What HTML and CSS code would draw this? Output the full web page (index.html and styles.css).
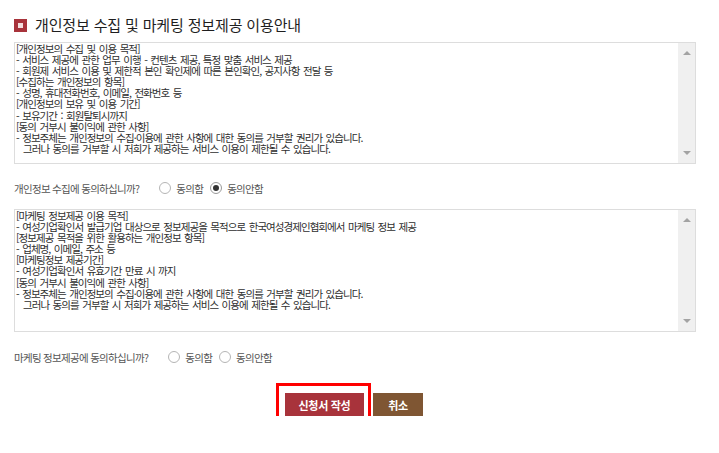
FILE: index.html
```html
<!DOCTYPE html>
<html lang="ko">
<head>
<meta charset="utf-8">
<title>개인정보 수집 및 마케팅 정보제공 이용안내</title>
<link rel="stylesheet" href="styles.css">
</head>
<body>
<div class="page">
  <h2 class="title"><span class="title-icon"></span><span class="title-text">개인정보 수집 및 마케팅 정보제공 이용안내</span></h2>

  <div class="box box-first">
    <div class="box-text">[개인정보의 수집 및 이용 목적]
- 서비스 제공에 관한 업무 이행 - 컨텐츠 제공, 특정 맞춤 서비스 제공
- 회원제 서비스 이용 및 제한적 본인 확인제에 따른 본인확인, 공지사항 전달 등
[수집하는 개인정보의 항목]
- 성명, 휴대전화번호, 이메일, 전화번호 등
[개인정보의 보유 및 이용 기간]
- 보유기간 : 회원탈퇴시까지
[동의 거부시 불이익에 관한 사항]
- 정보주체는 개인정보의 수집·이용에 관한 사항에 대한 동의를 거부할 권리가 있습니다.
  그러나 동의를 거부할 시 저희가 제공하는 서비스 이용이 제한될 수 있습니다.</div>
    <div class="scrollbar"><span class="arrow-up"></span><span class="arrow-down"></span></div>
  </div>

  <div class="question q-first">
    <span class="q-label">개인정보 수집에 동의하십니까?</span>
    <span class="opt"><span class="radio"></span>동의함</span>
    <span class="opt"><span class="radio checked"></span>동의안함</span>
  </div>

  <div class="box box-second">
    <div class="box-text">[마케팅 정보제공 이용 목적]
- 여성기업확인서 발급기업 대상으로 정보제공을 목적으로 한국여성경제인협회에서 마케팅 정보 제공
[정보제공 목적을 위한 활용하는 개인정보 항목]
- 업체명, 이메일, 주소 등
[마케팅정보 제공기간]
- 여성기업확인서 유효기간 만료 시 까지
[동의 거부시 불이익에 관한 사항]
- 정보주체는 개인정보의 수집·이용에 관한 사항에 대한 동의를 거부할 권리가 있습니다.
  그러나 동의를 거부할 시 저희가 제공하는 서비스 이용에 제한될 수 있습니다.</div>
    <div class="scrollbar"><span class="arrow-up"></span><span class="arrow-down"></span></div>
  </div>

  <div class="question q-second">
    <span class="q-label">마케팅 정보제공에 동의하십니까?</span>
    <span class="opt"><span class="radio"></span>동의함</span>
    <span class="opt"><span class="radio"></span>동의안함</span>
  </div>

  <div class="actions">
    <span class="highlight"><button class="btn btn-submit" type="button">신청서 작성</button></span>
    <button class="btn btn-cancel" type="button">취소</button>
  </div>
</div>
</body>
</html>
```

FILE: styles.css
```css
html, body {
  margin: 0;
  padding: 0;
  background: #ffffff;
}

body {
  font-family: "Noto Sans CJK KR", "Noto Sans", sans-serif;
  color: #333333;
}

.page {
  width: 682px;
  padding: 14px 0 0 14px;
}

.title {
  display: flex;
  align-items: center;
  height: 22px;
  margin: 0;
  font-weight: normal;
}

.title-icon {
  box-sizing: border-box;
  width: 13px;
  height: 13px;
  background: #a8333b;
  display: flex;
  align-items: center;
  justify-content: center;
  margin-right: 8px;
}

.title-icon::after {
  content: "";
  width: 5px;
  height: 5px;
  background: #f3dede;
}

.title-text {
  font-size: 15px;
  letter-spacing: -0.15px;
  color: #1e1e1e;
  line-height: 22px;
}

.box {
  box-sizing: border-box;
  display: flex;
  border: 1px solid #dddddd;
  background: #ffffff;
}

.box-first {
  margin-top: 6px;
  height: 122px;
}

.box-second {
  margin-top: 11px;
  height: 123px;
}

.box-text {
  flex: 1;
  white-space: pre-wrap;
  font-size: 10.5px;
  line-height: 11.1px;
  letter-spacing: -0.95px;
  word-spacing: 1.5px;
  color: #2e2e2e;
  padding: 0 0 0 1px;
}

.scrollbar {
  width: 17px;
  background: #f0f0f0;
  display: flex;
  flex-direction: column;
  align-items: center;
  justify-content: space-between;
  padding: 8px 0 8px;
  box-sizing: border-box;
}

.arrow-up,
.arrow-down {
  width: 0;
  height: 0;
  border-left: 4px solid transparent;
  border-right: 4px solid transparent;
}

.arrow-up {
  border-bottom: 4px solid #a3a3a3;
}

.arrow-down {
  border-top: 4px solid #a3a3a3;
}

.question {
  display: flex;
  align-items: center;
  height: 20px;
  font-size: 10.5px;
  letter-spacing: -0.7px;
  color: #555555;
}

.q-first {
  margin-top: 14px;
}

.q-second {
  margin-top: 15px;
}

.q-label {
  margin-right: 20px;
}

.opt {
  display: flex;
  align-items: center;
  margin-right: 7px;
}

.radio {
  box-sizing: border-box;
  width: 12px;
  height: 12px;
  border: 1px solid #b5b5b5;
  border-radius: 50%;
  background: #ffffff;
  margin-right: 5px;
  display: flex;
  align-items: center;
  justify-content: center;
}

.radio.checked {
  border-color: #9a9a9a;
}

.radio.checked::after {
  content: "";
  width: 6px;
  height: 6px;
  border-radius: 50%;
  background: #333333;
}

.actions {
  display: flex;
  justify-content: center;
  align-items: center;
  margin-top: 26px;
  gap: 9px;
  padding-right: 2px;
}

.highlight {
  position: relative;
  display: flex;
}

.highlight::after {
  content: "";
  position: absolute;
  top: -10px;
  left: -9px;
  right: -7px;
  bottom: -7px;
  border: 3px solid #ff0000;
}

.btn {
  height: 23px;
  border: 0;
  padding: 0;
  color: #ffffff;
  font-family: "Noto Sans CJK KR", "Noto Sans", sans-serif;
  font-size: 11px;
  font-weight: bold;
  letter-spacing: -0.3px;
  cursor: pointer;
}

.btn-submit {
  width: 79px;
  background: #a8333b;
}

.btn-cancel {
  width: 50px;
  background: #7f5633;
}
```
